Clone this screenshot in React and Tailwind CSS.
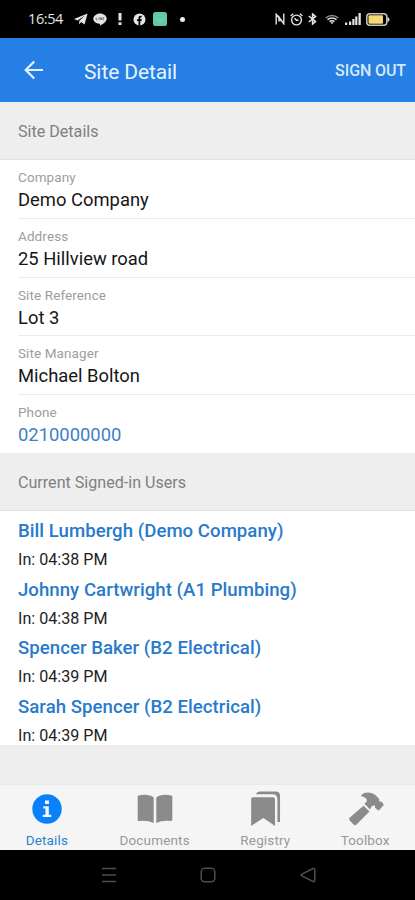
import React from "react";

const fields = [
  { label: "Company", value: "Demo Company" },
  { label: "Address", value: "25 Hillview road" },
  { label: "Site Reference", value: "Lot 3" },
  { label: "Site Manager", value: "Michael Bolton" },
  { label: "Phone", value: "0210000000", link: true },
];

const users = [
  { name: "Bill Lumbergh (Demo Company)", time: "In: 04:38 PM" },
  { name: "Johnny Cartwright (A1 Plumbing)", time: "In: 04:38 PM" },
  { name: "Spencer Baker (B2 Electrical)", time: "In: 04:39 PM" },
  { name: "Sarah Spencer (B2 Electrical)", time: "In: 04:39 PM" },
];

function StatusBar() {
  return (
    <div className="flex h-[38px] shrink-0 items-center bg-black pl-7 text-[#e4e4e4]">
      <span className="w-[46px] whitespace-nowrap font-['Open_Sans',sans-serif] text-[14.5px] leading-none tracking-[-0.4px]">16:54</span>
      <svg className="h-3 w-[14px]" viewBox="0 0 14 12" fill="currentColor">
        <path d="M13.6.5 0 6.1l3.6 1.3L11 2.6 5.2 8v3.4l2-2.3 3.3 2.3z" />
      </svg>
      <svg className="ml-[5px] h-[13px] w-[14px]" viewBox="0 0 14 13" fill="currentColor">
        <path d="M7 .5c3.700 0 6.700 2.300 6.700 5.300S10 11 7 12.800v-2C3.300 10.800.3 8.500.3 5.800S3.300.5 7 .5z" />
        <path d="M3.200 4.500v2.400h1.300M6 4.500v2.400M7.300 6.900V4.500l1.400 2.400V4.500M11.200 4.500h-1.100v2.400h1.100" fill="none" stroke="#555" strokeWidth=".7" />
      </svg>
      <svg className="ml-[11px] h-3 w-[4px]" viewBox="0 0 4 12" fill="currentColor">
        <path d="M.5 0h3v7.500h-3zM.5 9.300h3V12h-3z" />
      </svg>
      <svg className="ml-[11px] h-[13px] w-[13px]" viewBox="0 0 13 13">
        <circle cx="6.500" cy="6.500" r="6" fill="currentColor" />
        <path d="M5.500 12.800V8H4V6.200h1.500V5c0-1.700 1-2.500 3.200-2.200v1.500c-1-.1-1.400.1-1.400.8v1.100h1.500L8.500 8H7.300v4.800z" fill="#000" />
      </svg>
      <svg className="ml-[7px] h-[14px] w-[14px]" viewBox="0 0 14 14">
        <rect width="14" height="14" rx="2.500" fill="#60c9a0" />
        <circle cx="7" cy="7" r="4" fill="none" stroke="#74d0ac" strokeWidth="1" />
        <path d="M5 7.500q2 2 4 0" fill="none" stroke="#9be0c8" strokeWidth=".8" />
      </svg>
      <span className="ml-[13px] h-[5px] w-[5px] rounded-full bg-[#eee]" />
      <svg className="ml-[90px] h-3 w-[10px]" viewBox="0 0 10 12" fill="none" stroke="currentColor" strokeWidth="1.400">
        <path d="M1.200 11.500V1.200L6 8M8.800.5v10.300L4 4v4.500" />
      </svg>
      <svg className="ml-[5px] h-[13px] w-[13px]" viewBox="0 0 13 13" fill="none" stroke="currentColor" strokeWidth="1.400">
        <circle cx="6.500" cy="7" r="4.900" />
        <path d="M.6 3 3.200.8M12.400 3 9.800.8M4.500 5.200l2 2h2" />
      </svg>
      <svg className="ml-[5px] h-3 w-[9px]" viewBox="0 0 9 12" fill="none" stroke="currentColor" strokeWidth="1.600">
        <path d="m.8 3 6.700 5.500L4.600 11V1l2.900 2.500L.8 9" />
      </svg>
      <svg className="ml-[8px] h-[11px] w-[14px]" viewBox="0 0 14 11" fill="none" stroke="currentColor" strokeWidth="1.500">
        <path d="M.8 3.800q6.200-4.800 12.400 0" opacity=".6" />
        <path d="M2.500 5.600q4.500-3.200 9 0M4.500 7.500q2.500-1.500 5 0" strokeWidth="1.700" />
        <path d="m5.500 8.200 1.500 2 1.500-2z" fill="currentColor" stroke="none" />
      </svg>
      <svg className="ml-[6px] h-3 w-4" viewBox="0 0 16 12" fill="currentColor">
        <path d="M0 9.500h2.200V12H0zM4 8.500h2.200V12H4zM7.300 6h2.200v6H7.300zM10.200 3.500h2.200V12h-2.200zM13.500 0h2.300v12h-2.300z" />
      </svg>
      <svg className="ml-[5px] h-[13px] w-[24px]" viewBox="0 0 24 13">
        <rect x=".8" y=".8" width="20" height="11.400" rx="3" fill="none" stroke="#c9c7bd" strokeWidth="1.500" />
        <rect x="2.500" y="2.300" width="14.500" height="8.400" rx="1" fill="#f3d873" />
        <path d="M21.500 4q2 .5 2 2.500t-2 2.500z" fill="#ddd" />
      </svg>
    </div>
  );
}

function Header() {
  return (
    <div className="flex h-16 shrink-0 items-center bg-[#267fe4] text-[#e6f3ff]">
      <svg className="ml-6 h-[20px] w-[20px]" viewBox="0 0 20 20" fill="none" stroke="currentColor" strokeWidth="2.200">
        <path d="M19 10H2M10.200 1.500 1.700 10l8.500 8.500" />
      </svg>
      <span className="ml-[40px] mt-[4px] text-[21px] leading-none tracking-[-0.1px]">Site Detail</span>
      <span className="ml-auto mr-[9px] mt-[2px] text-[16px] font-medium leading-none tracking-[-0.1px] text-[#d3eaff]">SIGN OUT</span>
    </div>
  );
}

function Section({ children }) {
  return (
    <div className="flex h-[58px] shrink-0 items-center border-b border-[#e2e2e2] bg-[#eeeeee] pl-[18px] pt-[4px] text-[16.1px] text-[#808080]">
      {children}
    </div>
  );
}

function Tab({ label, active, className, children }) {
  return (
    <div className={`flex flex-col items-center ${className}`}>
      <div className="flex h-[47px] items-center justify-center">{children}</div>
      <span className={`text-[13.5px] leading-[16px] tracking-[0.15px] ${active ? "text-[#2b83cc]" : "text-[#999]"}`}>{label}</span>
    </div>
  );
}

function Tabs() {
  return (
    <div className="flex h-[66px] shrink-0 border-t border-[#e8e8e8] bg-[#f5f5f5]">
      <Tab label="Details" active className="w-[94px]">
        <svg className="mt-[1px] h-[30px] w-[30px]" viewBox="0 0 30 30">
          <circle cx="15" cy="15" r="14.700" fill="#0a80fa" />
          <path d="M13 6.500h4v3.400h-4zM11.300 12.300h5.500v8.400h2.500V23h-8.600v-2.300h2.700v-6.100h-2.100z" fill="#f5f5f5" />
        </svg>
      </Tab>
      <Tab label="Documents" className="w-[122px]">
        <svg className="h-[30px] w-[36px]" viewBox="0 0 36 30" fill="#8b8b8b">
          <path d="M1.500 1.500Q12-.5 16.700 3.500V29Q11 26.200 2 27 .7 27 .7 25.500V2.700q0-1 .8-1.200zM34.500 1.500Q24-.5 19.300 3.500V29q5.700-2.800 14.700-2 1.300 0 1.300-1.500V2.700q0-1-.8-1.200z" />
        </svg>
      </Tab>
      <Tab label="Registry" className="w-[100px]">
        <svg className="ml-[1px] h-[37px] w-[31px]" viewBox="0 0 32 38" fill="#8b8b8b">
          <path d="M3 7.500h21q1.800 0 1.800 1.800V37l-12-8.200L1.200 37V9.300Q1.200 7.500 3 7.500z" />
          <path d="M6 4.200Q7 1.500 10 1.500h16.500q4.500 0 4.500 4.500v27h-2.700V9.500q0-5.300-5.300-5.300z" />
        </svg>
      </Tab>
      <Tab label="Toolbox" className="w-[100px]">
        <svg className="ml-[1px] h-[34px] w-[36px]" viewBox="0 0 36 34" fill="#8b8b8b">
          <path d="m15.500 13.800 6 5.800L8.500 32.500q-1.500 1.300-3 0l-3.800-4q-1.300-1.500.2-3z" />
          <path d="M12.800 3.900Q15 .5 20.500.5q4 0 6.800 2.600l3.300 3.200q1 1 .8 3l1 .8 1.200-.6 1.700 2.200q.7.900 0 1.700l-4 4.700q-.8.800-1.700 0l-2.700-2.500.3-1.500-1-.8-2.500.9-1.700 3.300-5.600-5.700 2.300-2.300Q20 5.500 12.800 3.900z" />
        </svg>
      </Tab>
    </div>
  );
}

export default function App() {
  return (
    <div className="flex h-[900px] w-[415px] flex-col overflow-hidden bg-white font-[Roboto,sans-serif]">
      <StatusBar />
      <Header />
      <Section>Site Details</Section>
      <div className="flex h-[293px] shrink-0 flex-col bg-white pl-[18px]">
        {fields.map((f, i) => (
          <div key={f.label} className={`flex flex-1 flex-col pt-[8px] ${i < 4 ? "border-b border-[#ebebeb]" : ""}`}>
            <span className="text-[13.500px] leading-[18px] tracking-[0.1px] text-[#9d9d9d]">{f.label}</span>
            <span className={`text-[18.4px] leading-[28px] ${f.link ? "text-[#437fc7]" : "text-[#161616]"}`}>{f.value}</span>
          </div>
        ))}
      </div>
      <Section>Current Signed-in Users</Section>
      <div className="flex h-[234px] shrink-0 flex-col bg-white pl-[18px]">
        {users.map((u) => (
          <div key={u.name} className="flex flex-1 flex-col pt-[7px]">
            <span className="text-[18.6px] font-medium leading-[26px] tracking-[0.04px] text-[#287acc]">{u.name}</span>
            <span className="mt-[4px] -mb-[4px] text-[16.1px] leading-[24px] text-[#222]">{u.time}</span>
          </div>
        ))}
      </div>
      <div className="h-[39px] shrink-0 bg-[#eeeeee]" />
      <Tabs />
      <div className="flex h-[50px] shrink-0 items-center bg-black">
        <svg className="ml-[101px] h-4 w-4" viewBox="0 0 16 16" stroke="#4d4d4d" strokeWidth="1.500">
          <path d="M1 1.500h14M1 8h14M1 14.500h14" />
        </svg>
        <svg className="ml-[83px] h-4 w-4" viewBox="0 0 16 16" fill="none" stroke="#4d4d4d" strokeWidth="1.500">
          <rect x="1.200" y="1.200" width="13.600" height="13.600" rx="3.500" />
        </svg>
        <svg className="ml-[84px] h-4 w-4" viewBox="0 0 16 16" fill="none" stroke="#4d4d4d" strokeWidth="1.500" strokeLinejoin="round">
          <path d="M13 1.500 1.500 7.300q-1 .7 0 1.400L13 14.500q1.800.5 1.800-1.200V2.700q0-1.700-1.800-1.200z" />
        </svg>
      </div>
    </div>
  );
}
